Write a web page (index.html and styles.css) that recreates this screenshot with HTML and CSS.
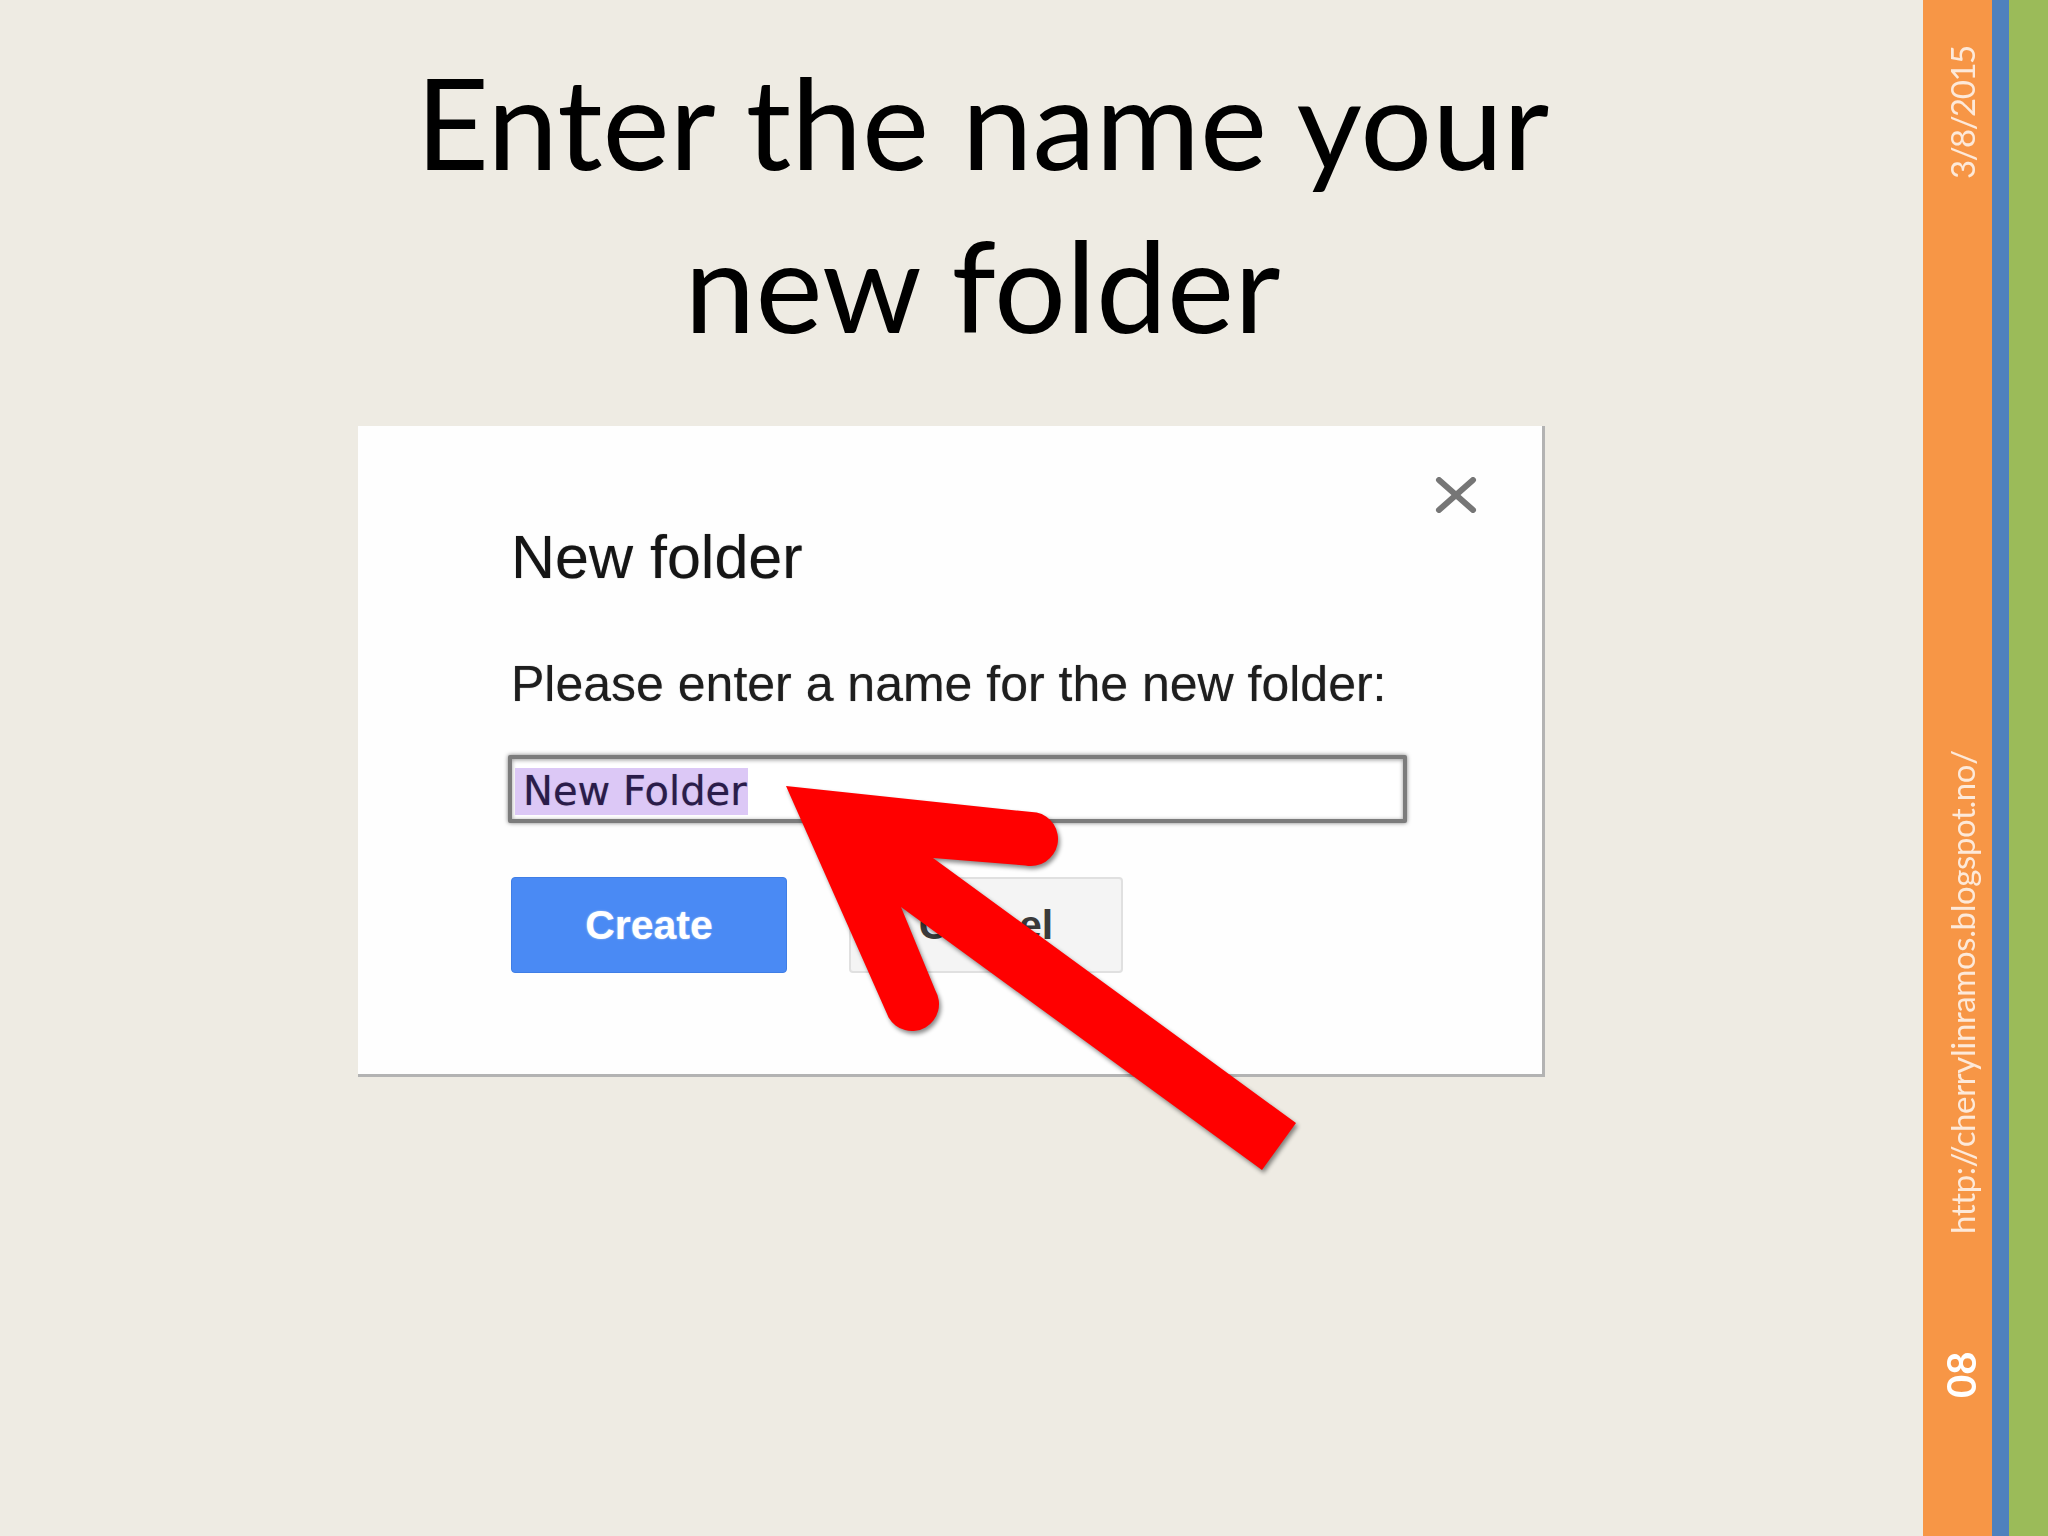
FILE: index.html
```html
<!DOCTYPE html>
<html>
<head>
<meta charset="utf-8">
<link rel="stylesheet" href="styles.css">
</head>
<body>
<div class="slide">
  <main class="content">
    <h1 class="title">Enter the name your<br>new folder</h1>
    <div class="dialog">
      <svg class="close" viewBox="0 0 42 36" width="42" height="36">
        <path d="M4 3 L38 33 M38 3 L4 33" stroke="#767676" stroke-width="6" stroke-linecap="round" fill="none"/>
      </svg>
      <h2 class="dlg-title">New folder</h2>
      <p class="dlg-text">Please enter a name for the new folder:</p>
      <div class="input"><span class="sel">New Folder</span></div>
      <div class="buttons">
        <div class="btn create">Create</div>
        <div class="btn cancel">Cancel</div>
      </div>
    </div>
  </main>
  <aside class="bar-orange">
    <div class="vtext date">3/8/2015</div>
    <div class="vtext url">http://cherrylinramos.blogspot.no/</div>
    <div class="vtext num">08</div>
  </aside>
  <div class="bar-blue"></div>
  <div class="bar-green"></div>
  <svg class="arrow" viewBox="0 0 2048 1536" width="2048" height="1536">
    <path d="M786 786 L1036.7 812.6 A27 27 0 0 1 1025.3 865.4 L933 858 L1296 1123 L1262 1170 L901 907 L935.4 990.5 A27 27 0 0 1 888.6 1017.5 Z" fill="#ff0000"/>
  </svg>
</div>
</body>
</html>
```
FILE: styles.css
```css
html, body {
  margin: 0;
  padding: 0;
}
body {
  background: #eeebe3;
}
.slide {
  position: relative;
  display: flex;
  width: 2048px;
  height: 1536px;
  overflow: hidden;
  background: #eeebe3;
}
.content {
  flex: none;
  width: 1923px;
  padding-top: 40px;
  box-sizing: border-box;
}
.title {
  margin: 0 0 0 42px;
  font-family: Lato, "Open Sans", sans-serif;
  font-weight: 400;
  font-size: 127px;
  line-height: 163px;
  text-align: center;
  color: #000;
}
.dialog {
  position: relative;
  margin: 60px 0 0 358px;
  width: 1187px;
  height: 651px;
  box-sizing: border-box;
  padding: 101px 0 0 153px;
  background: #fefefe;
  border-right: 3px solid #b3b3b3;
  border-bottom: 3px solid #b3b3b3;
}
.close {
  position: absolute;
  left: 1077px;
  top: 51px;
  filter: blur(0.6px);
}
.dlg-title {
  margin: 0;
  font-family: "Liberation Sans", Arial, sans-serif;
  font-weight: 400;
  font-size: 61px;
  line-height: 61px;
  color: #151515;
  text-shadow: 0 0 1px rgba(0, 0, 0, 0.5);
}
.dlg-text {
  margin: 71px 0 0;
  font-family: "Liberation Sans", Arial, sans-serif;
  font-size: 50px;
  line-height: 50px;
  color: #1e1e1e;
  text-shadow: 0 0 1px rgba(0, 0, 0, 0.5);
}
.input {
  margin: 46px 0 0 -3px;
  width: 899px;
  height: 68px;
  box-sizing: border-box;
  border: 4px solid #7c7c7c;
  border-radius: 2px;
  box-shadow: 0 0 4px rgba(0, 0, 0, 0.5), inset 0 1px 4px rgba(0, 0, 0, 0.4);
  padding: 9px 0 0 3px;
  background: #fff;
}
.sel {
  display: inline-block;
  height: 47px;
  line-height: 47px;
  padding: 0 1px 0 8px;
  background: #dcc8f6;
  font-family: "DejaVu Sans", Verdana, sans-serif;
  font-size: 40px;
  color: #2a1c4a;
  vertical-align: top;
  text-shadow: 0 0 1px rgba(42, 28, 74, 0.5);
}
.buttons {
  display: flex;
  gap: 62px;
  margin-top: 54px;
}
.btn {
  height: 96px;
  box-sizing: border-box;
  border-radius: 4px;
  display: flex;
  align-items: center;
  justify-content: center;
  font-family: "Liberation Sans", Arial, sans-serif;
  font-weight: 700;
  font-size: 41px;
}
.create {
  width: 276px;
  background: #4a8af4;
  border: 1px solid #3f7ee6;
  color: #fff;
  text-shadow: 0 0 2px rgba(255, 255, 255, 0.6);
}
.cancel {
  width: 274px;
  background: #f4f4f4;
  border: 2px solid #e0e0e0;
  color: #3a3a3a;
}
.bar-orange {
  flex: none;
  width: 69px;
  height: 1536px;
  background: #f79646;
  display: flex;
  flex-direction: column;
}
.bar-blue {
  flex: none;
  width: 17px;
  background: #4f81bd;
}
.bar-green {
  flex: none;
  width: 39px;
  background: #9bbb59;
}
.vtext {
  writing-mode: vertical-rl;
  transform: rotate(180deg);
  font-family: Lato, "Open Sans", sans-serif;
  text-align: center;
  white-space: nowrap;
}
.date {
  margin: 52px 0 0 23px;
  height: 127px;
  width: 33px;
  font-size: 33px;
  line-height: 33px;
  letter-spacing: -1.5px;
  color: #fde9d9;
}
.url {
  margin: 572px 0 0 23px;
  height: 483px;
  width: 33px;
  font-size: 33px;
  line-height: 33px;
  letter-spacing: -0.4px;
  color: #fde9d9;
}
.num {
  margin: 124px 0 0 18px;
  height: 40px;
  width: 40px;
  font-size: 40px;
  line-height: 40px;
  font-weight: 700;
  color: #fff;
}
.arrow {
  position: absolute;
  left: 0;
  top: 0;
  pointer-events: none;
  filter: drop-shadow(2px 3px 2px rgba(0, 0, 0, 0.45));
}
```
